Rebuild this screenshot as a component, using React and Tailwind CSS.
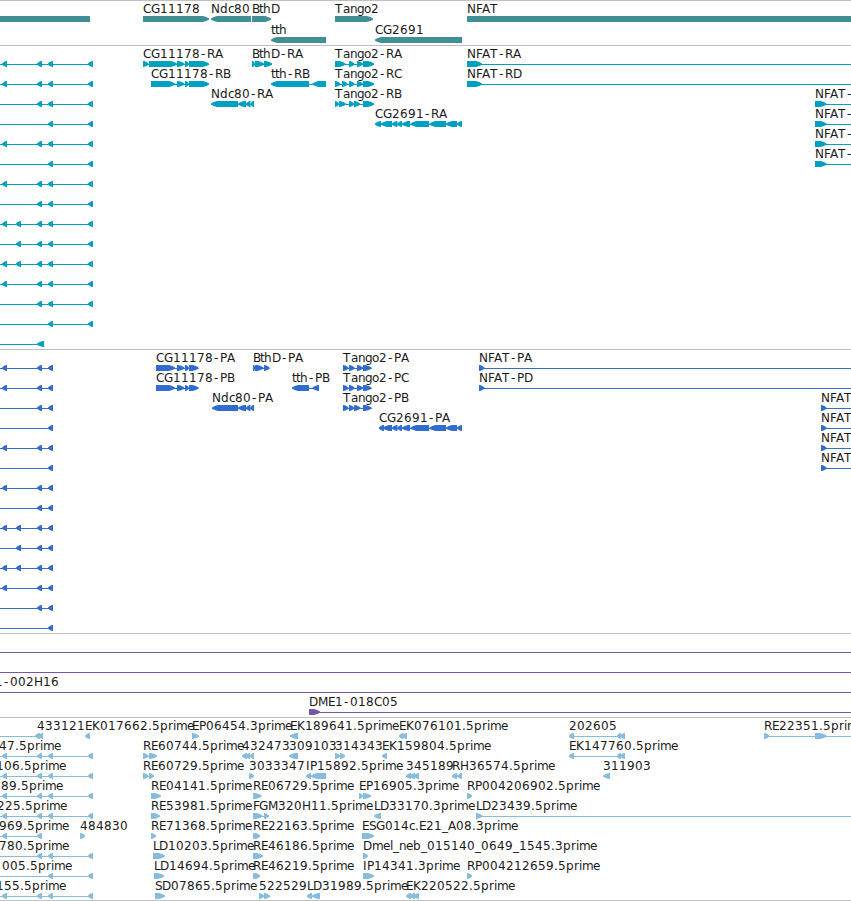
import React from "react";

const VIEW_WIDTH = 851;

// Pixel advance of each glyph, rounded to the grid
const ADVANCE = {
  A: 8, B: 7, C: 8, D: 9, E: 7, F: 6, G: 9, H: 9, I: 4, K: 8, L: 6, M: 10,
  N: 9, P: 7, R: 8, S: 7, T: 8, a: 7, b: 8, c: 6, d: 8, e: 7, g: 7, h: 8,
  i: 3, l: 3, m: 11, n: 7, o: 7, p: 8, r: 5, t: 4, ".": 4, "-": 7, _: 6,
};

const R = "right";
const L = "left";

// Exon: [start, end]
const A = [2, 7];
const B = [16, 21];
const C = [37, 42];
const D = [48, 53];
const E = [88, 93];

// Feature: { row, label, x (label start), dir, exons, line: [from, to] }
const feature = (row, label, x, dir, exons, line) => ({ row, label, x, dir, exons, line });
const offLeft = (row, exons) =>
  feature(row, "", 0, L, exons, [0, exons[exons.length - 1][1]]);

const genes = [
  feature(0, "", 0, null, [[0, 90]]),
  feature(0, "CG11178", 143, R, [[143, 209]]),
  feature(0, "Ndc80", 211, L, [[211, 251]]),
  feature(0, "BthD", 252, R, [[252, 271]]),
  feature(1, "tth", 271, L, [[271, 326]]),
  feature(0, "Tango2", 335, R, [[335, 373]]),
  feature(1, "CG2691", 375, L, [[375, 462]]),
  feature(0, "NFAT", 467, null, [[467, 851]]),
];

const cg2691Tail = [[392, 397.5], [397.5, 402], [402, 410], [410.5, 429], [429.5, 446], [446, 457], [457, 462]];

const transcripts = [
  ...[
    [A, C, D, E], [A, C, D, E], [C, D, E], [D, E], [A, C, D, E], [D, E], [A, C, D, E],
    [C, D, E], [A, B, C, D, E], [B, C, D, E], [A, B, C, D, E], [A, C, D, E], [C, D, E],
    [D, E], [[37, 44]],
  ].map((exons, row) => offLeft(row, exons)),
  feature(0, "CG11178-RA", 143, R, [[143, 148.5], [149, 177], [177, 184.5], [185, 189], [189, 209]]),
  feature(1, "CG11178-RB", 151, R, [[151, 175], [177, 184.5], [185, 189], [189, 209]]),
  feature(2, "Ndc80-RA", 211, L, [[211, 238], [238, 246], [246, 250.5], [250.5, 254]]),
  feature(0, "BthD-RA", 252, R, [[252, 255], [255, 264], [264, 272]]),
  feature(1, "tth-RB", 271, L, [[271, 309], [312.5, 326]]),
  feature(0, "Tango2-RA", 335, R, [[335, 345.5], [349, 354.5], [357, 363], [363, 374]]),
  feature(1, "Tango2-RC", 335, R, [[335, 340.5], [342, 347.5], [349, 354.5], [357, 363], [363, 374]]),
  feature(2, "Tango2-RB", 335, R, [[335, 339], [339, 346], [349, 354], [354, 360], [363, 374]]),
  feature(3, "CG2691-RA", 375, L, [[375, 381], [381, 392], ...cg2691Tail]),
  feature(0, "NFAT-RA", 467, R, [[467, 482]], [467, 851]),
  feature(1, "NFAT-RD", 467, R, [[467, 482]], [467, 851]),
  ...["NFAT-RB", "NFAT-RC", "NFAT-RE", "NFAT-RF"].map((name, i) =>
    feature(2 + i, name, 815, R, [[815, 826.5]], [815, 851])
  ),
];

const proteins = [
  ...[
    [A, C, D], [A, C, D], [C, D], [D], [A, C, D], [D], [A, C, D],
    [C, D], [A, B, C, D], [B, C, D], [A, B, C, D], [A, C, D], [C, D], [D],
  ].map((exons, row) => offLeft(row, exons)),
  feature(0, "CG11178-PA", 156, R, [[156, 175], [177, 184.5], [185, 189], [189, 198.5]]),
  feature(1, "CG11178-PB", 156, R, [[156, 175], [177, 184.5], [185, 189], [189, 198.5]]),
  feature(2, "Ndc80-PA", 212, L, [[212, 238], [238, 246], [246, 250.5], [250.5, 254]]),
  feature(0, "BthD-PA", 253, R, [[253, 255], [255, 263.5], [264, 269.5]]),
  feature(1, "tth-PB", 292, L, [[292, 309], [312.5, 319]]),
  feature(0, "Tango2-PA", 343, R, [[343, 348.5], [349, 354.5], [357, 363], [363, 371.5]]),
  feature(1, "Tango2-PC", 343, R, [[343, 348.5], [349, 354.5], [357, 363], [363, 371.5]]),
  feature(2, "Tango2-PB", 343, R, [[343, 348.5], [349, 354], [354, 360.5], [363, 371.5]]),
  feature(3, "CG2691-PA", 379, L, [[379, 384], [383, 392], ...cg2691Tail]),
  feature(0, "NFAT-PA", 479, R, [[479, 484.5]], [479, 851]),
  feature(1, "NFAT-PD", 479, R, [[479, 484.5]], [479, 851]),
  ...["NFAT-PB", "NFAT-PC", "NFAT-PE", "NFAT-PF"].map((name, i) =>
    feature(2 + i, name, 821, R, [[821, 826.5]], [821, 851])
  ),
];

const clones = [
  feature(0, "", 0, R, [], [0, 851]),
  feature(1, "", 0, R, [], [0, 851]),
  feature(2, "DME1-002H16", -31, R, [], [0, 851]),
  feature(3, "DME1-018C05", 309, R, [[309, 320]], [309, 851]),
];

const triple = [[406, 411], [410, 415], [414, 419]];
const split = [[569, 574], [617, 621], [620, 625]];

const ests = [
  feature(0, "", 0, L, [[35, 40], [38, 43]], [0, 43]),
  feature(0, "433121", 37, L, []),
  feature(0, "EK017662.5prime", 85, L, [[85, 90]]),
  feature(0, "EP06454.3prime", 192, R, [[192, 199]]),
  feature(0, "EK189641.5prime", 290, L, [[290, 298]]),
  feature(0, "EK076101.5prime", 399, L, [[399, 403.5], [402, 407]]),
  feature(0, "202605", 569, L, split),
  feature(0, "RE22351.5prime", 764, R, [[764, 769.5], [815, 826.5]], [764, 851]),

  feature(1, "47.5prime", -1, L, [A, C, D, E], [0, 93]),
  feature(1, "RE60744.5prime", 143, R, [[143, 148.5], [149, 157]]),
  feature(1, "432473", 242, L, [[242, 247], [246, 250], [250, 254]]),
  feature(1, "309103", 289, L, [[289, 298]]),
  feature(1, "314343", 335, R, [[335, 340], [340, 345]]),
  feature(1, "EK159804.5prime", 382, L, [[382, 387]]),
  feature(1, "EK147760.5prime", 569, L, split),

  feature(2, "106.5prime", -4, L, [A, C, D, E], [0, 93]),
  feature(2, "RE60729.5prime", 143, R, [[143, 148.5], [149, 154]]),
  feature(2, "3033347", 249, R, [[249, 254]]),
  feature(2, "IP15892.5prime", 306, L, [[306, 311], [311, 326]]),
  feature(2, "345189", 406, L, triple),
  feature(2, "RH36574.5prime", 452, L, [[452, 457], [457, 462]]),
  feature(2, "311903", 603, L, [[603, 610]]),

  feature(3, "89.5prime", 1, L, [A, C, D, E], [0, 93]),
  feature(3, "RE04141.5prime", 151, R, [[151, 161]]),
  feature(3, "RE06729.5prime", 253, R, [[253, 261.5]]),
  feature(3, "EP16905.3prime", 359, R, [[359, 363], [363, 371]]),
  feature(3, "RP004206902.5prime", 467, R, [[467, 472]]),

  feature(4, "225.5prime", -3, L, [A, C, D, E], [0, 93]),
  feature(4, "RE53981.5prime", 151, R, [[151, 160]]),
  feature(4, "FGM320H11.5prime", 253, R, [[253, 262.5], [264, 269]]),
  feature(4, "LD33170.3prime", 374, L, [[374, 381]]),
  feature(4, "LD23439.5prime", 476, R, [[476, 482.5]], [476, 851]),

  feature(5, "969.5prime", -1, L, [A, C], [0, 42]),
  feature(5, "484830", 80, R, [[80, 85]]),
  feature(5, "RE71368.5prime", 151, R, [[151, 156]]),
  feature(5, "RE22163.5prime", 253, R, [[253, 256], [255, 260]]),
  feature(5, "ESG014c.E21_A08.3prime", 362, R, [[362, 374]]),

  feature(6, "780.5prime", -1, L, [C, D, E], [0, 93]),
  feature(6, "LD10203.5prime", 153, R, [[153, 165]]),
  feature(6, "RE46186.5prime", 253, R, [[253, 263]]),
  feature(6, "Dmel_neb_015140_0649_1545.3prime", 363, R, [[363, 368]]),

  feature(7, "005.5prime", 2, L, [D, E], [0, 93]),
  feature(7, "LD14694.5prime", 154, R, [[154, 164]]),
  feature(7, "RE46219.5prime", 253, R, [[253, 256], [255, 260]]),
  feature(7, "IP14341.3prime", 363, R, [[363, 374]]),
  feature(7, "RP004212659.5prime", 467, R, [[467, 472]]),

  feature(8, "155.5prime", -4, L, [A, C, D, E], [0, 93]),
  feature(8, "SD07865.5prime", 155, R, [[155, 165]]),
  feature(8, "522529", 259, R, [[259, 264], [264, 270]]),
  feature(8, "LD31989.5prime", 307, L, [[307, 312], [312, 320]]),
  feature(8, "EK220522.5prime", 406, L, triple),
];

function glyphPositions(text, start) {
  let x = start;
  return [...text]
    .map((ch) => {
      // the hyphen sits in the middle of its wide cell
      const at = ch === "-" ? x + 1 : x;
      x += ADVANCE[ch] || 8;
      return at;
    })
    .join(" ");
}

// Exon body with a rounded-off arrow head
function exonPoints([start, end], dir, top) {
  const mid = top + 3;
  const bottom = top + 6;
  if (!dir) return `${start},${top} ${end},${top} ${end},${bottom} ${start},${bottom}`;
  const head = Math.min(end - start - 1, 6);
  const tail = dir === R ? start : end;
  const tip = dir === R ? end : start;
  const back = dir === R ? -1 : 1;
  const neck = tip + back * head;
  const cheek = tip + back * head * 0.45;
  return [
    [tail, top], [neck, top], [cheek, mid - 1.9], [tip, mid - 0.6],
    [tip, mid + 0.8], [cheek, mid + 1.9], [neck, bottom], [tail, bottom],
  ].join(" ");
}

function Feature({ row, label, x, dir, exons, line, pitch }) {
  const y = row * pitch;
  const span = line || (exons.length > 1 ? [exons[0][0], exons[exons.length - 1][1]] : null);

  return (
    <g>
      {span && <rect x={span[0]} y={y + 18} width={span[1] - span[0]} height={1} />}
      {exons.map((exon, i) => (
        <polygon key={i} points={exonPoints(exon, dir, y + 15)} />
      ))}
      {label && (
        <text x={glyphPositions(label, x)} y={y + 12} className="fill-[#1a1a1a]">
          {label}
        </text>
      )}
    </g>
  );
}

function Track({ features, height, color, pitch = 20 }) {
  return (
    <section className="border-t border-[#c0c0c0]">
      <svg
        width={VIEW_WIDTH}
        height={height}
        className={`block overflow-hidden font-['DejaVu_Sans',sans-serif] text-[12px] ${color}`}
      >
        {features.map((f, i) => (
          <Feature key={i} {...f} pitch={pitch} />
        ))}
      </svg>
    </section>
  );
}

export default function App() {
  return (
    <main className="w-[851px] overflow-hidden border-b border-[#c0c0c0] bg-white">
      <Track features={genes} height={44} color="fill-[#408f94]" pitch={21} />
      <Track features={transcripts} height={303} color="fill-[#00a0c0]" />
      <Track features={proteins} height={283} color="fill-[#306dce]" />
      <Track features={clones} height={83} color="fill-[#7755aa]" />
      <Track features={ests} height={182} color="fill-[#88bcdd]" />
    </main>
  );
}
